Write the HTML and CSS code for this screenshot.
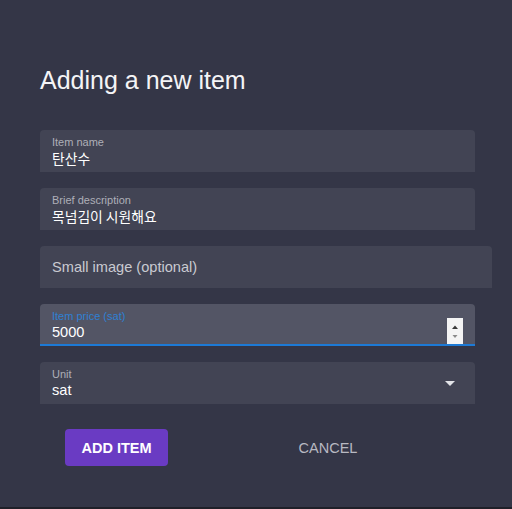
FILE: index.html
```html
<!DOCTYPE html>
<html lang="en">
<head>
<meta charset="utf-8">
<title>Adding a new item</title>
<link rel="stylesheet" href="styles.css">
</head>
<body>
<div class="page">
  <h1 class="title">Adding a new item</h1>
  <div class="form">
    <div class="field">
      <div class="label">Item name</div>
      <div class="value ko">탄산수</div>
    </div>
    <div class="field">
      <div class="label">Brief description</div>
      <div class="value ko">목넘김이 시원해요</div>
    </div>
    <div class="field field-wide field-center">
      <div class="placeholder">Small image (optional)</div>
    </div>
    <div class="field field-focused">
      <div class="label label-focused">Item price (sat)</div>
      <div class="value">5000</div>
      <div class="spinner">
        <svg width="16" height="26" viewBox="0 0 16 26">
          <path d="M5 11 L8 7.5 L11 11 Z" fill="#3a3a3a"/>
          <path d="M5.5 17 L8 20 L10.5 17 Z" fill="#8a8a8a"/>
        </svg>
      </div>
    </div>
    <div class="field">
      <div class="label">Unit</div>
      <div class="value">sat</div>
      <svg class="caret" width="10" height="5" viewBox="0 0 10 5"><path d="M0 0 L10 0 L5 5 Z" fill="#e2e3e8"/></svg>
    </div>
  </div>
  <div class="actions">
    <button class="btn btn-primary">ADD ITEM</button>
    <button class="btn btn-text">CANCEL</button>
  </div>
</div>
</body>
</html>
```
FILE: styles.css
```css
html, body {
  margin: 0;
  padding: 0;
  background: #343647;
}
.page {
  width: 512px;
  height: 507px;
  border-bottom: 2px solid #1f2029;
  background: #343647;
  font-family: "Liberation Sans", Arial, "Noto Sans CJK KR", sans-serif;
  color: #ffffff;
  overflow: hidden;
}
.title {
  margin: 0;
  padding: 64px 0 0 40px;
  font-size: 25px;
  line-height: 32px;
  font-weight: 400;
  color: #f4f4f6;
}
.form {
  display: flex;
  flex-direction: column;
  gap: 16px;
  padding: 34px 0 0 40px;
}
.field {
  position: relative;
  box-sizing: border-box;
  width: 435px;
  height: 42px;
  padding: 6px 12px 0;
  background: #424454;
  border-radius: 4px 4px 0 0;
}
.field-wide {
  width: 452px;
}
.field-center {
  display: flex;
  align-items: center;
  padding-top: 0;
}
.field-focused {
  background: #535565;
  border-bottom: 2px solid #1d7ad6;
}
.label {
  font-size: 11px;
  line-height: 13px;
  color: #aeafb8;
}
.label-focused {
  color: #2f80d3;
}
.value {
  font-size: 14.6px;
  line-height: 18px;
  color: #ffffff;
}
.value.ko {
  font-family: "Noto Sans CJK KR", sans-serif;
  font-size: 13.8px;
}
.placeholder {
  font-size: 14.6px;
  line-height: 18px;
  color: #c9cad1;
}
.spinner {
  position: absolute;
  right: 12px;
  bottom: 0;
  width: 16px;
  height: 26px;
  background: #f4f4f4;
}
.spinner svg {
  display: block;
}
.caret {
  position: absolute;
  right: 20px;
  top: 19px;
}
.actions {
  display: flex;
  align-items: center;
  padding: 25px 0 0 65px;
  gap: 120px;
}
.btn {
  font-family: "Liberation Sans", Arial, sans-serif;
  font-size: 14.5px;
  border: none;
  padding: 0;
  height: 37px;
  cursor: pointer;
}
.btn-primary {
  width: 103px;
  background: #6a3bc3;
  color: #ffffff;
  font-weight: 700;
  border-radius: 4px;
}
.btn-text {
  width: 80px;
  background: transparent;
  color: #b8b9c2;
  font-weight: 400;
}
```
